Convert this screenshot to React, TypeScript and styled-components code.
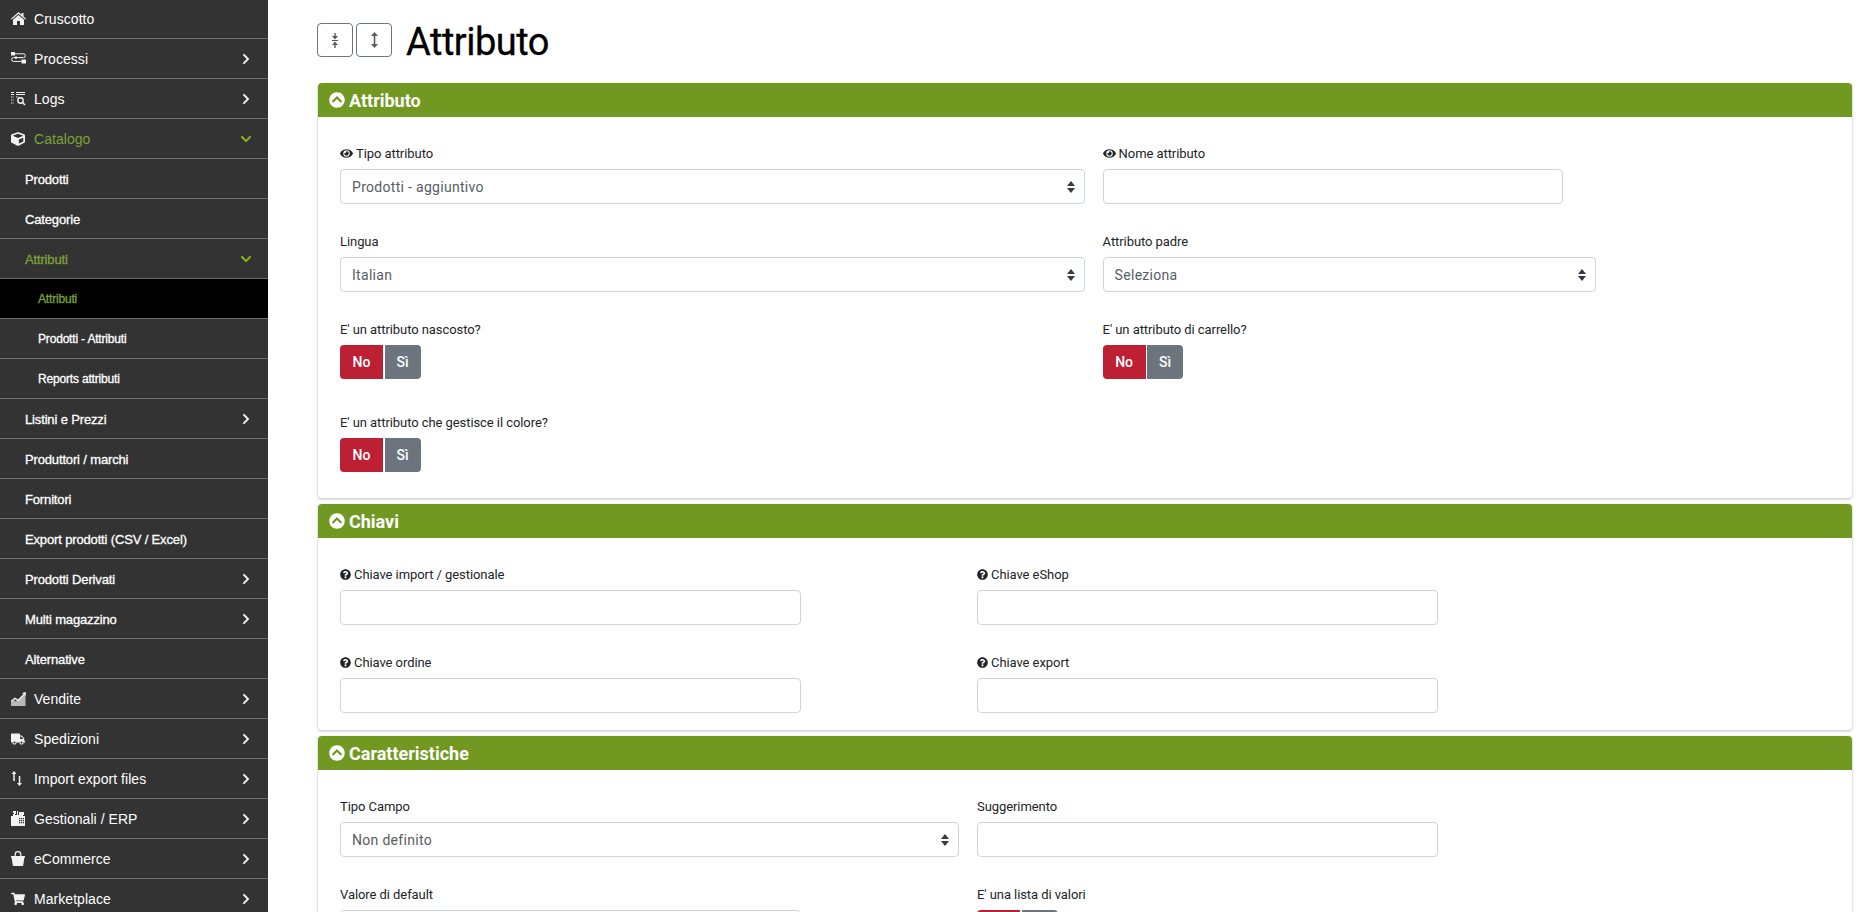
import React from "react";
import styled, { createGlobalStyle } from "styled-components";
import { FaCube, FaTruck, FaShoppingCart, FaChevronCircleUp, FaEye, FaQuestionCircle, FaChevronRight, FaChevronDown } from "react-icons/fa";

const Global = createGlobalStyle`
  html, body { margin: 0; padding: 0; height: 100%; overflow: hidden; background: #fff; }
  * { box-sizing: border-box; }
`;
const Page = styled.div`display: flex; height: 912px; overflow: hidden; font-family: Roboto, "Liberation Sans", sans-serif;`;
const Sidebar = styled.nav`width: 268px; flex: none; background: #333333; overflow: hidden; font-family: "Liberation Sans", Arial, sans-serif;`;
const List = styled.div`margin-top: -1px;`;
const Row = styled.div<{ $level: number; $active?: boolean; $current?: boolean }>`
  height: 40px; display: flex; align-items: center; border-bottom: 1px solid #6e6e6e;
  padding-left: ${p => (p.$level === 0 ? 11 : p.$level === 1 ? 25 : 38)}px; padding-right: 15px;
  padding-top: ${p => (p.$level === 0 ? 0 : 1)}px;
  background: ${p => (p.$current ? "#000" : "transparent")};
  color: ${p => (p.$active ? "#7da23a" : "#fff")};
  font-size: ${p => (p.$level === 0 ? 14 : p.$level === 1 ? 13 : 12)}px;
  letter-spacing: ${p => (p.$level === 0 ? "0.05px" : p.$level === 1 ? "-0.15px" : "-0.18px")};
  -webkit-text-stroke: ${p => (p.$level === 0 ? "0" : "0.3px")};
`;
const IconSlot = styled.span`width: 23px; flex: none; display: flex; align-items: center; color: #f2f2f2; svg { display: block; }`;
const RowLabel = styled.span`flex: 1; white-space: nowrap;`;
const Caret = styled.span<{ $active?: boolean }>`width: 14px; display: flex; justify-content: center; color: ${p => (p.$active ? "#8ab31c" : "#f0f0f0")};`;
const Main = styled.main`flex: 1; padding: 0 13px 0 50px; min-width: 0;`;
const Header = styled.header`height: 83px; display: flex; align-items: flex-start; padding-top: 23px; margin-left: -1px;`;
const HeadButton = styled.button`width: 36px; height: 34px; margin-right: 3px; padding: 0; background: #fff; border: 1px solid #6c757d; border-radius: 4px; display: flex; align-items: center; justify-content: center; color: #6c757d;`;
const Title = styled.h1`margin: -5px 0 0 11px; font-size: 38px; line-height: 48px; font-weight: 400; letter-spacing: -0.5px; -webkit-text-stroke: 0.3px #000; color: #000; font-family: Roboto, sans-serif;`;
const Card = styled.section`border-radius: 4px; background: #fff; box-shadow: 0 1px 3px rgba(0,0,0,.28); margin-bottom: 6px;`;
const CardHead = styled.div`height: 34px; background: #719922; color: #fff; border-radius: 4px 4px 0 0; display: flex; align-items: center; padding-left: 11px; font-size: 18px; font-weight: 700; gap: 4px; svg { display: block; }`;
const CardBody = styled.div<{ $h: number }>`padding: 26px 22px 0; height: ${p => p.$h}px;`;
const Grid = styled.div<{ $cols: string }>`display: grid; grid-template-columns: ${p => p.$cols}; row-gap: 27px; align-items: start;`;
const Field = styled.div``;
const Label = styled.label`display: flex; align-items: center; gap: 3px; height: 20px; margin-bottom: 6px; font-size: 13px; letter-spacing: -0.07px; color: #212529; white-space: nowrap; svg { display: block; }`;
const Control = styled.div<{ $w: number }>`position: relative; width: ${p => p.$w}px; height: 35px; border: 1px solid #ced4da; border-radius: 4px; background: #fff; color: #555d64; font-size: 14px; letter-spacing: .3px; display: flex; align-items: center; padding-left: 11px;`;
const Updown = styled.svg`position: absolute; right: 9px; top: 11px;`;
const Toggle = styled.div`display: flex; gap: 1.6px; height: 34px; margin-bottom: 6px;`;
const Tbtn = styled.button<{ $on?: boolean }>`
  height: 34px; padding: 0; border: 0; color: #fff; font: 500 14px Roboto, sans-serif;
  width: ${p => (p.$on ? 43 : 36)}px; background: ${p => (p.$on ? "#bd1f33" : "#6c757d")};
  border-radius: ${p => (p.$on ? "4px 0 0 4px" : "0 4px 4px 0")};
`;

const w = "#f2f2f2";
const Home = () => (<svg width="15" height="13" viewBox="0 0 15 13" fill={w}><path d="M7.5 0 10.5 2.7V1h2v3.5L15 6.8l-.8.8L7.5 1.7.8 7.6 0 6.8z"/><path d="M7.5 3 13 7.8V13H9V9H6v4H2V7.8z"/></svg>);
const Proc = () => (<svg width="15" height="14" viewBox="0 0 15 14" fill="none" stroke={w} strokeWidth="1"><rect x=".5" y=".5" width="3" height="2.5" fill={w}/><path d="M4 1.8h8.5a1.8 1.8 0 0 1 0 3.8H2.5a1.8 1.8 0 0 0 0 3.8h8"/><circle cx="5" cy="5.6" r=".9" fill={w}/><path d="M8 5.6h3"/><rect x="11" y="8" width="3.5" height="3" fill={w}/></svg>);
const Logs = () => (<svg width="15" height="14" viewBox="0 0 15 14" fill="none" stroke={w} strokeWidth="1"><path d="M0 .5h3M5 .5h9M0 2.5h3M5 2.5h9" /><path d="M0 5h3M0 8h3M0 11h3M5 5h3" strokeDasharray="1 .6"/><circle cx="9.5" cy="8.5" r="2.7" strokeWidth="1.4"/><path d="M11.5 10.5 14 13" strokeWidth="1.6"/></svg>);
const Chart = () => (<svg width="15" height="14" viewBox="0 0 15 14" fill={w}><path opacity=".7" d="M0 14V10l2.5-2L5 9.500 8 7l2-1 2-2.500 2.500-1V14z"/><path d="M0 8.500 4 5.500 7 7.500 12.500 2 11 1 15 0l-.5 4-1-1L7 9.500 4 7.300 0 10z"/></svg>);
const Arrows = () => (<svg width="12" height="15" viewBox="0 0 12 15" fill={w}><path d="M3 0 5.500 3H3.800v7H2.300V3H.5zM7.800 5h1.500v7H11l-2.500 3L6 12h1.800z"/></svg>);
const Register = () => (<svg width="14" height="15" viewBox="0 0 14 15" fill={w}><path d="M2 0h3v3H4v1h2V0h1v4h1V1h5v3h-1v1h2v10H0V5h2V3h1V2H2z"/><g fill="#333"><path d="M8 7h1.300v1.200H8zM10 7h1.300v1.200H10zM12 7h1v1.200h-1zM8 9h1.300v1.200H8zM10 9h1.300v1.200H10zM12 9h1v1.200h-1zM8 11h1.300v1.200H8zM10 11h1.300v1.200H10zM12 11h1v1.200h-1z"/></g></svg>);
const Bag = () => (<svg width="14" height="15" viewBox="0 0 14 15"><path d="M4.200 5V3.500a2.800 2.800 0 0 1 5.600 0V5" fill="none" stroke={w} strokeWidth="1.200"/><path fill={w} d="M0 5h14v1.500h-.6L12.300 14a1 1 0 0 1-1 1H2.700a1 1 0 0 1-1-1L.6 6.500H0z"/></svg>);
const R = <FaChevronRight size={12} />;
const D = <FaChevronDown size={12} />;

type Item = { t: string; l?: number; i?: React.ReactNode; c?: "r" | "d"; a?: boolean; cur?: boolean };
const items: Item[] = [
  { t: "Cruscotto", i: <Home /> },
  { t: "Processi", i: <Proc />, c: "r" },
  { t: "Logs", i: <Logs />, c: "r" },
  { t: "Catalogo", i: <FaCube size={14} />, c: "d", a: true },
  { t: "Prodotti", l: 1 },
  { t: "Categorie", l: 1 },
  { t: "Attributi", l: 1, c: "d", a: true },
  { t: "Attributi", l: 2, a: true, cur: true },
  { t: "Prodotti - Attributi", l: 2 },
  { t: "Reports attributi", l: 2 },
  { t: "Listini e Prezzi", l: 1, c: "r" },
  { t: "Produttori / marchi", l: 1 },
  { t: "Fornitori", l: 1 },
  { t: "Export prodotti (CSV / Excel)", l: 1 },
  { t: "Prodotti Derivati", l: 1, c: "r" },
  { t: "Multi magazzino", l: 1, c: "r" },
  { t: "Alternative", l: 1 },
  { t: "Vendite", i: <Chart />, c: "r" },
  { t: "Spedizioni", i: <FaTruck size={14} />, c: "r" },
  { t: "Import export files", i: <Arrows />, c: "r" },
  { t: "Gestionali / ERP", i: <Register />, c: "r" },
  { t: "eCommerce", i: <Bag />, c: "r" },
  { t: "Marketplace", i: <FaShoppingCart size={14} />, c: "r" },
];

const F = ({ label, icon, children }: { label: string; icon?: "eye" | "q"; children: React.ReactNode }) => (
  <Field>
    <Label>{icon === "eye" && <FaEye size={13} />}{icon === "q" && <FaQuestionCircle size={11} />}{label}</Label>
    {children}
  </Field>
);
const Input = ({ w }: { w: number }) => <Control $w={w} />;
const Select = ({ w, v }: { w: number; v: string }) => (
  <Control $w={w}>{v}
    <Updown width="8" height="12" viewBox="0 0 8 12" fill="#343a40"><path d="M4 0 8 5H0zM0 7h8l-4 5z" /></Updown>
  </Control>
);
const YesNo = () => <Toggle><Tbtn $on>No</Tbtn><Tbtn>Sì</Tbtn></Toggle>;
const Head = ({ t }: { t: string }) => <CardHead><FaChevronCircleUp size={16} />{t}</CardHead>;

export default function App() {
  return (
    <Page>
      <Global />
      <Sidebar>
        <List>
          {items.map((it, k) => (
            <Row key={k} $level={it.l ?? 0} $active={it.a} $current={it.cur}>
              {it.i && <IconSlot>{it.i}</IconSlot>}
              <RowLabel>{it.t}</RowLabel>
              {it.c && <Caret $active={it.c === "d"}>{it.c === "r" ? R : D}</Caret>}
            </Row>
          ))}
        </List>
      </Sidebar>
      <Main>
        <Header>
          <HeadButton aria-label="comprimi">
            <svg width="6" height="15" viewBox="0 0 6 15" fill="#555d64"><path d="M2.300 0h1.400v3H6L3 6.500 0 3h2.300zM0 7h6v1H0zM3 8.500 6 12H3.700v3H2.300v-3H0z" /></svg>
          </HeadButton>
          <HeadButton aria-label="espandi">
            <svg width="7" height="16" viewBox="0 0 7 16" fill="#555d64"><path d="M3.500 0 7 4H4.300v8H7l-3.500 4L0 12h2.700V4H0z" /></svg>
          </HeadButton>
          <Title>Attributo</Title>
        </Header>

        <Card>
          <Head t="Attributo" />
          <CardBody $h={381}>
            <Grid $cols="762.6px 1fr">
              <F label="Tipo attributo" icon="eye"><Select w={745} v="Prodotti - aggiuntivo" /></F>
              <F label="Nome attributo" icon="eye"><Input w={460} /></F>
              <F label="Lingua"><Select w={745} v="Italian" /></F>
              <F label="Attributo padre"><Select w={493} v="Seleziona" /></F>
              <F label="E' un attributo nascosto?"><YesNo /></F>
              <F label="E' un attributo di carrello?"><YesNo /></F>
              <F label="E' un attributo che gestisce il colore?"><YesNo /></F>
            </Grid>
          </CardBody>
        </Card>

        <Card>
          <Head t="Chiavi" />
          <CardBody $h={192}>
            <Grid $cols="637px 1fr">
              <F label="Chiave import / gestionale" icon="q"><Input w={461} /></F>
              <F label="Chiave eShop" icon="q"><Input w={461} /></F>
              <F label="Chiave ordine" icon="q"><Input w={461} /></F>
              <F label="Chiave export" icon="q"><Input w={461} /></F>
            </Grid>
          </CardBody>
        </Card>

        <Card>
          <Head t="Caratteristiche" />
          <CardBody $h={300}>
            <Grid $cols="637px 1fr">
              <F label="Tipo Campo"><Select w={619} v="Non definito" /></F>
              <F label="Suggerimento"><Input w={461} /></F>
              <F label="Valore di default"><Input w={461} /></F>
              <F label="E' una lista di valori"><YesNo /></F>
            </Grid>
          </CardBody>
        </Card>
      </Main>
    </Page>
  );
}
